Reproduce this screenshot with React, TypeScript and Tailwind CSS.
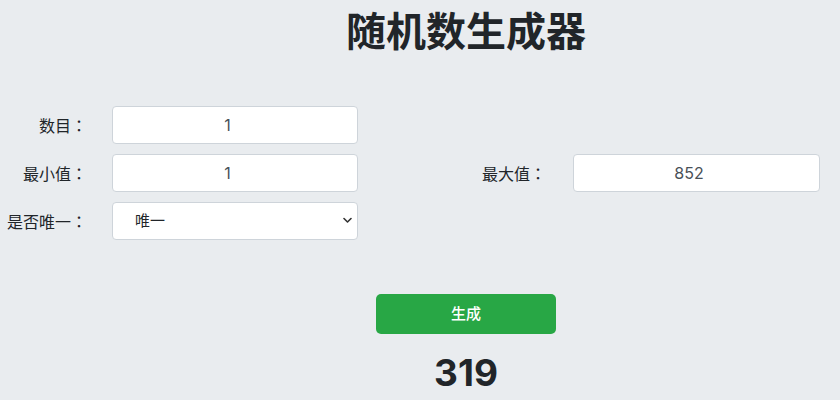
import React from "react";

const font = { fontFamily: "Inter, 'Noto Sans CJK SC', sans-serif" };

function Label({ text, className }: { text: string; className: string }) {
  return (
    <label className={`text-right text-[16px] text-[#212529] ${className}`}>
      {text}
      <span className="font-['Noto_Sans_CJK_TC',sans-serif]">：</span>
    </label>
  );
}

function NumberBox({ value, className }: { value: string; className: string }) {
  return (
    <input
      type="text"
      defaultValue={value}
      className={`h-[38px] rounded-[4px] border border-[#ced4da] bg-white pl-[12px] pr-[27px] text-center text-[16px] text-[#495057] outline-none ${className}`}
    />
  );
}

export default function App() {
  return (
    <div className="min-h-screen w-[840px] bg-[#e9ecef] text-[#212529]" style={font}>
      <h1 className="pt-[8px] pl-[92px] text-center text-[40px] font-bold leading-[48px]">随机数生成器</h1>

      <div className="mt-[50px] flex flex-col gap-[10px]">
        <div className="flex items-center">
          <Label text="数目" className="w-[87px]" />
          <NumberBox value="1" className="ml-[25px] w-[246px]" />
        </div>
        <div className="flex items-center">
          <Label text="最小值" className="w-[87px]" />
          <NumberBox value="1" className="ml-[25px] w-[246px]" />
          <Label text="最大值" className="w-[188px]" />
          <NumberBox value="852" className="ml-[27px] w-[247px]" />
        </div>
        <div className="flex items-center">
          <Label text="是否唯一" className="w-[87px]" />
          <div className="relative ml-[25px] w-[246px]">
            <select className="h-[38px] w-full appearance-none rounded-[4px] border border-[#ced4da] bg-white pl-[22px] text-[15px] text-[#212529] outline-none">
              <option>唯一</option>
              <option>不唯一</option>
            </select>
            <svg
              className="pointer-events-none absolute right-[6px] top-[15px]"
              width="9"
              height="7"
              viewBox="0 0 9 7"
              fill="none"
              stroke="#333"
              strokeWidth="1.6"
              strokeLinecap="round"
              strokeLinejoin="round"
            >
              <path d="M1 1.5 L4.5 5 L8 1.5" />
            </svg>
          </div>
        </div>
      </div>

      <div className="mt-[54px] flex justify-center pl-[92px]">
        <button className="h-[40px] w-[180px] rounded-[5px] bg-[#28a745] text-[15px] font-medium text-white">生成</button>
      </div>

      <div className="mt-[17px] pl-[92px] text-center text-[37px] font-bold leading-[44px]">319</div>
    </div>
  );
}
